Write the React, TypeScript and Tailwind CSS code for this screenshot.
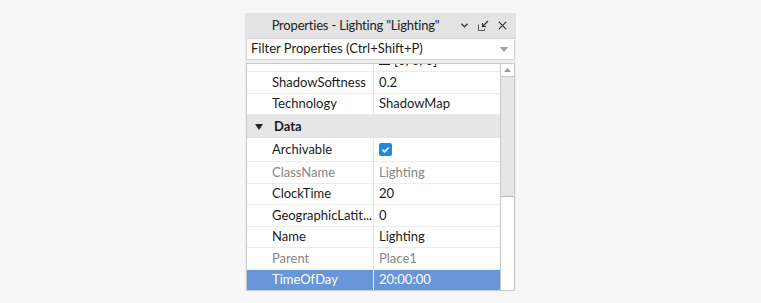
import React from 'react';

type Row = { name: string; value: string; dim?: boolean; check?: boolean; selected?: boolean };

const rows: Row[] = [
  { name: 'Archivable', value: '', check: true },
  { name: 'ClassName', value: 'Lighting', dim: true },
  { name: 'ClockTime', value: '20' },
  { name: 'GeographicLatit...', value: '0' },
  { name: 'Name', value: 'Lighting' },
  { name: 'Parent', value: 'Place1', dim: true },
  { name: 'TimeOfDay', value: '20:00:00', selected: true },
];

const PropRow: React.FC<{ row: Row }> = ({ row }) => (
  <div
    className={`flex ${row.check ? 'h-[24px]' : 'h-[21.5px]'} border-b ${row.selected ? 'bg-[#6896d9] border-[#6896d9] text-white' : 'border-[#ececec]'} ${row.dim && !row.selected ? 'text-[#858585]' : ''}`}
  >
    <div className={`w-[127px] shrink-0 pl-[25px] flex items-center border-r ${row.selected ? 'border-[#e8eef8]' : 'border-[#e6e6e6]'}`}>
      <span className="truncate">{row.name}</span>
    </div>
    <div className="flex-1 pl-[5px] flex items-center">
      {row.check ? (
        <span className="w-[13px] h-[13px] rounded-[2px] bg-[#1d8ae0] flex items-center justify-center">
          <svg width="9" height="9" viewBox="0 0 10 10">
            <path d="M1.5 5.2 L4 7.5 L8.5 2.8" fill="none" stroke="white" strokeWidth="1.8" />
          </svg>
        </span>
      ) : (
        <span>{row.value}</span>
      )}
    </div>
  </div>
);

export default function App() {
  return (
    <div className="w-[761px] h-[303px] bg-[#f7f7f7] overflow-hidden" style={{ fontFamily: '"Lato", "Noto Sans", sans-serif' }}>
      <div className="ml-[245px] mt-[13px] w-[271px] bg-[#eeeeee] text-[13px] text-[#1b1b1b]">
        {/* title bar */}
        <div className="h-[25px] bg-[#e3e3e3] flex items-center relative">
          <div className="flex-1 text-center pr-[50px] text-[13px] tracking-[-0.2px] text-[#222]">Properties - Lighting "Lighting"</div>
          <div className="absolute right-[9px] top-0 h-full flex items-center gap-[9px] text-[#444]">
            <svg width="9" height="9" viewBox="0 0 10 10">
              <path d="M1.5 3 L5 6.5 L8.5 3" fill="none" stroke="#3a3a3a" strokeWidth="1.5" />
            </svg>
            <svg width="11" height="11" viewBox="0 0 11 11">
              <path d="M0.5 4.5 V10.5 H6.5 V8.5" fill="none" stroke="#555" strokeWidth="1" />
              <path d="M10 1 L4.5 6.5 M4.5 3 V6.5 H8" fill="none" stroke="#333" strokeWidth="1.2" />
            </svg>
            <svg width="9" height="9" viewBox="0 0 10 10">
              <path d="M1 1 L9 9 M9 1 L1 9" fill="none" stroke="#333" strokeWidth="1.3" />
            </svg>
          </div>
        </div>
        {/* filter */}
        <div className="h-[22px] mx-[1px] bg-white border border-[#d4d4d4] flex items-center pl-[4px] pr-[6px] text-[13px] text-[#1b1b1b]">
          <span className="flex-1">Filter Properties (Ctrl+Shift+P)</span>
          <svg width="8" height="5" viewBox="0 0 8 5">
            <path d="M0 0 H8 L4 5 Z" fill="#a0a0a0" />
          </svg>
        </div>
        {/* grid */}
        <div className="mt-[3px] mx-[1px] h-[228px] bg-[#eeeeee] border border-[#c9c9c9] flex">
          <div className="flex-1 bg-white overflow-hidden self-start max-h-[226px]">
            <div className="flex h-[21.5px] -mt-[13.5px] border-b border-[#ececec]">
              <div className="w-[127px] shrink-0 border-r border-[#e6e6e6]" />
              <div className="flex-1 pl-[5px] flex items-center gap-[4px]">
                <span className="w-[11px] h-[9px] bg-[#1b1b1b]" />
                <span>[0, 0, 0]</span>
              </div>
            </div>
            <PropRow row={{ name: 'ShadowSoftness', value: '0.2' }} />
            <PropRow row={{ name: 'Technology', value: 'ShadowMap' }} />
            <div className="h-[23px] bg-[#e6e6e6] flex items-center font-bold">
              <svg className="ml-[8px] mr-[11px]" width="8" height="6" viewBox="0 0 8 6">
                <path d="M0 0 H8 L4 6 Z" fill="#222" />
              </svg>
              <span>Data</span>
            </div>
            {rows.map((r) => (
              <PropRow key={r.name} row={r} />
            ))}
          </div>
          {/* scrollbar */}
          <div className="w-[14px] shrink-0 flex flex-col bg-white border-l border-[#c9c9c9]">
            <div className="h-[13px] bg-white border-b border-[#c9c9c9] flex items-center justify-center">
              <svg width="7" height="4" viewBox="0 0 7 4">
                <path d="M0 4 H7 L3.5 0 Z" fill="#9a9a9a" />
              </svg>
            </div>
            <div className="h-[120px] bg-[#e6e6e6] border-b border-[#b8b8b8]" />
            <div className="flex-1 bg-white" />
          </div>
        </div>
      </div>
    </div>
  );
}
